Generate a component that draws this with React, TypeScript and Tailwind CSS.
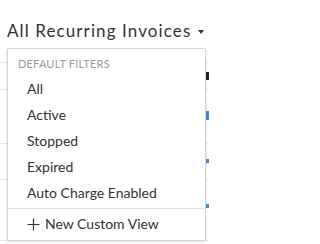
const filters = ["All", "Active", "Stopped", "Expired", "Auto Charge Enabled"];

// background table rows peeking out behind the menu
const rows: { h: string; mark?: string }[] = [
  { h: "h-[27px]", mark: "bg-[#222] h-[8px] mt-[9px]" },
  { h: "h-[54px]", mark: "bg-[#3b8ad9] h-[9px] mt-[21px]" },
  { h: "h-[36px]", mark: "bg-[#3b8ad9] h-[4px] mt-[15px]" },
  { h: "h-[61px]", mark: "bg-[#3b8ad9] h-[4px] mt-[24px]" },
];

export default function App() {
  return (
    <div className="relative w-[209px] h-[244px] overflow-hidden bg-white font-['Lato',sans-serif]">
      <div className="h-[63px] border-b border-[#e5e5e5] pl-[7px] pt-[21px]">
        <div className="flex items-center text-[17px] leading-[20px] text-[#333] tracking-[1.1px]">
          <span>All Recurring Invoices</span>
          <span className="ml-[7px] mt-[2px] h-0 w-0 border-x-[3px] border-t-[4px] border-x-transparent border-t-[#333]" />
        </div>
      </div>
      {rows.map((r, i) => (
        <div key={i} className={`${r.h} border-b border-[#e5e5e5] flex justify-end`}>
          <span className={`w-[3px] ${r.mark}`} />
        </div>
      ))}

      <div className="absolute left-[7px] top-[48px] w-[199px] h-[193px] rounded-[2px] border border-[#d6d6d6] bg-white shadow-[0_1px_3px_rgba(0,0,0,0.12)]">
        <div className="pl-[10px] pt-[9px] h-[27px] text-[11px] leading-[12px] text-[#9a9a9a] uppercase tracking-[0.2px]">
          Default Filters
        </div>
        <ul className="pb-[2px]">
          {filters.map((f) => (
            <li key={f} className="h-[26px] pl-[19px] text-[14px] leading-[26px] text-[#333]">
              {f}
            </li>
          ))}
        </ul>
        <div className="border-t border-[#e3e3e3] h-[32px] pl-[19px] flex items-center gap-[5px] text-[14px] text-[#333]">
          <svg width="13" height="13" viewBox="0 0 13 13" className="-mt-[1px]">
            <path d="M6.5 0.5v12M0.5 6.5h12" stroke="#333" strokeWidth="1.2" fill="none" />
          </svg>
          <span className="-mt-[2px]">New Custom View</span>
        </div>
      </div>
    </div>
  );
}
